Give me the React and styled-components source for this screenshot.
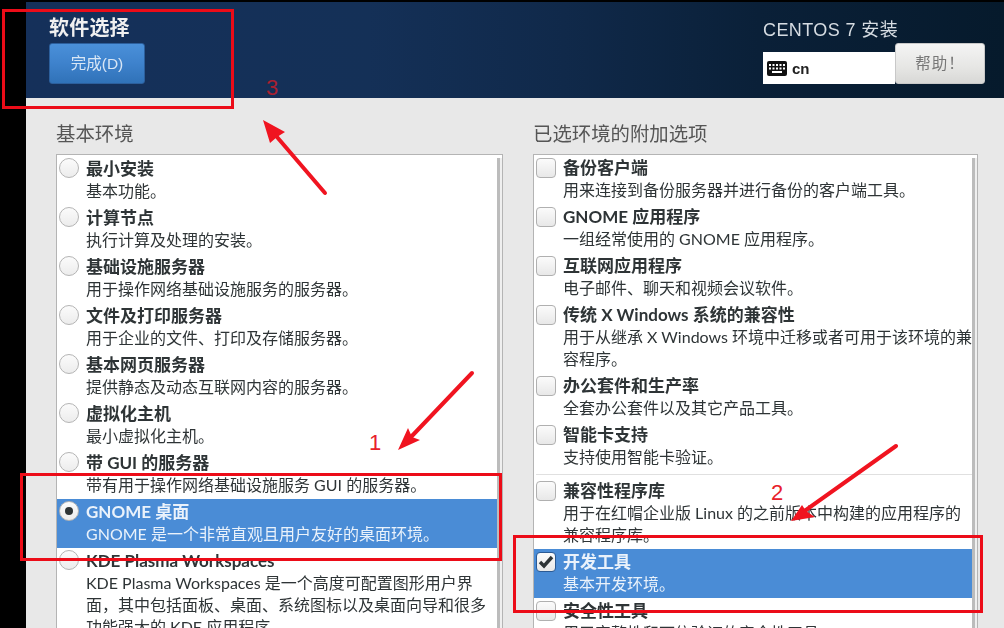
import styled, { createGlobalStyle } from "styled-components";

const GlobalStyle = createGlobalStyle`
    html, body {
        margin: 0;
        padding: 0;
        background: #000;
    }
    body {
        font-family: "Liberation Sans", "Noto Sans CJK SC", sans-serif;
    }
`;

const Screen = styled.div`
    position: relative;
    width: 1004px;
    height: 628px;
    overflow: hidden;
    padding-left: 26px;
    padding-top: 2px;
    box-sizing: border-box;
    background: #000;
`;
const Window = styled.div`
    height: 626px;
    display: flex;
    flex-direction: column;
    background: #e8e8e8;
    filter: blur(0.35px);
`;
const Header = styled.header`
    height: 96px;
    flex-shrink: 0;
    box-sizing: border-box;
    padding: 14px 18px 0 23px;
    display: flex;
    justify-content: space-between;
    color: #fff;
    background: linear-gradient(90deg, #15305a 0%, #143057 35%, #10294a 55%, #0a2038 75%, #061a2c 100%);
`;
const HeaderLeft = styled.div`
    display: flex;
    flex-direction: column;
    gap: 3px;
`;
const Spoke = styled.h1`
    margin: 0;
    font-size: 20px;
    line-height: 24px;
    font-weight: bold;
    letter-spacing: 0.2px;
    color: #f0f0f0;
`;
const DoneButton = styled.button`
    width: 96px;
    height: 41px;
    padding: 0 0 3px;
    border: 1px solid #2c5f9c;
    border-radius: 3px;
    font: inherit;
    font-size: 15.5px;
    color: #d8e6f5;
    background: linear-gradient(180deg, #4a90d9 0%, #3e82cc 50%, #3072b8 100%);
`;
const HeaderRight = styled.div`
    width: 223px;
    padding-top: 2px;
`;
const Product = styled.div`
    font-size: 18px;
    line-height: 24px;
    letter-spacing: 0.4px;
    color: #d6dce2;
    padding-bottom: 5px;
`;
const LangRow = styled.div`
    display: flex;
    align-items: flex-end;
    margin-top: -4px;
`;
const LangField = styled.div`
    width: 132px;
    height: 32px;
    box-sizing: border-box;
    padding-left: 4px;
    display: flex;
    align-items: center;
    gap: 5px;
    background: #fff;
    color: #222;
    font-size: 15px;
    font-weight: bold;
`;
const HelpButton = styled.button`
    width: 90px;
    height: 41px;
    padding: 0 0 3px;
    border: 1px solid #c8c8c8;
    border-radius: 3px;
    font: inherit;
    font-size: 15.5px;
    letter-spacing: 1px;
    color: #777;
    background: linear-gradient(180deg, #f4f4f4 0%, #e6e6e4 60%, #d8d8d6 100%);
`;
const Columns = styled.main`
    flex: 1;
    min-height: 0;
    display: grid;
    grid-template-columns: 447px 445px;
    column-gap: 30px;
    padding: 23px 0 0 30px;
`;
const Column = styled.section`
    display: flex;
    flex-direction: column;
    min-height: 0;
`;
const ColumnTitle = styled.h2`
    margin: 1px 0 8px;
    font-size: 19.4px;
    line-height: 24px;
    font-weight: normal;
    color: #555;
`;
const ListBox = styled.div`
    flex: 1;
    position: relative;
    box-sizing: border-box;
    padding-top: ${props => props.$offset || 0}px;
    border: 1px solid #b4b4b4;
    border-bottom: 0;
    background: #fff;
    overflow: hidden;
`;
const ScrollBar = styled.div`
    position: absolute;
    top: 3px;
    right: 0;
    bottom: 0;
    width: 3px;
    border-right: 2px solid #efefef;
    background: #bcbcbc;
`;
const Row = styled.div`
    height: ${props => props.$lines === 3 ? 71 : 49}px;
    box-sizing: border-box;
    padding: 1px 3px 0 29px;
    position: relative;
    font-family: Lato, "Noto Sans CJK SC", sans-serif;
    background: ${props => props.$selected ? "#4a8cd6" : "transparent"};
    color: ${props => props.$selected ? "#eaf2fb" : "#2e3436"};
`;
const RowTitle = styled.div`
    font-size: 17px;
    line-height: 23px;
    font-weight: bold;
    white-space: nowrap;
`;
const RowText = styled.div`
    font-size: 16px;
    line-height: 22px;
`;
const Radio = styled.span`
    position: absolute;
    left: 2px;
    top: 2px;
    width: 20px;
    height: 20px;
    box-sizing: border-box;
    border-radius: 50%;
    border: 1px solid #b4b4b4;
    display: flex;
    align-items: center;
    justify-content: center;
    background: linear-gradient(180deg, #fbfbfb 0%, #ececec 100%);
    &::after {
        content: "";
        display: ${props => props.$checked ? "block" : "none"};
        width: 8px;
        height: 8px;
        border-radius: 50%;
        background: #2e3436;
    }
`;
const CheckBox = styled.span`
    position: absolute;
    left: 2px;
    top: 3px;
    width: 20px;
    height: 20px;
    box-sizing: border-box;
    border-radius: 4px;
    border: 1px solid ${props => props.$checked ? "#2b5a94" : "#b0b0b0"};
    display: flex;
    align-items: center;
    justify-content: center;
    background: linear-gradient(180deg, #fbfbfb 0%, #e8e8e8 100%);
`;
const Separator = styled.div`
    height: 4px;
    margin: 0 2px 3px;
    border-bottom: 1px solid #e0e0e0;
    box-sizing: border-box;
`;
const RedBox = styled.div`
    position: absolute;
    left: ${props => props.$x}px;
    top: ${props => props.$y}px;
    width: ${props => props.$w}px;
    height: ${props => props.$h}px;
    box-sizing: border-box;
    border: 3px solid #ec0c18;
`;
const Number = styled.span`
    position: absolute;
    left: ${props => props.$x}px;
    top: ${props => props.$y}px;
    font-size: 22px;
    line-height: 24px;
    color: ${props => props.$dark ? "#a82030" : "#e8202a"};
`;
const ArrowLayer = styled.svg`
    position: absolute;
    left: 0;
    top: 0;
    pointer-events: none;
`;

const baseEnvs = [
    { title: "最小安装", text: "基本功能。" },
    { title: "计算节点", text: "执行计算及处理的安装。" },
    { title: "基础设施服务器", text: "用于操作网络基础设施服务的服务器。" },
    { title: "文件及打印服务器", text: "用于企业的文件、打印及存储服务器。" },
    { title: "基本网页服务器", text: "提供静态及动态互联网内容的服务器。" },
    { title: "虚拟化主机", text: "最小虚拟化主机。" },
    { title: "带 GUI 的服务器", text: "带有用于操作网络基础设施服务 GUI 的服务器。" },
    { title: "GNOME 桌面", text: "GNOME 是一个非常直观且用户友好的桌面环境。", selected: true },
    { title: "KDE Plasma Workspaces", text: "KDE Plasma Workspaces 是一个高度可配置图形用户界面，其中包括面板、桌面、系统图标以及桌面向导和很多功能强大的 KDE 应用程序。" },
];

const addons = [
    { title: "备份客户端", text: "用来连接到备份服务器并进行备份的客户端工具。" },
    { title: "GNOME 应用程序", text: "一组经常使用的 GNOME 应用程序。" },
    { title: "互联网应用程序", text: "电子邮件、聊天和视频会议软件。" },
    { title: "传统 X Windows 系统的兼容性", text: "用于从继承 X Windows 环境中迁移或者可用于该环境的兼容程序。", lines: 3 },
    { title: "办公套件和生产率", text: "全套办公套件以及其它产品工具。" },
    { title: "智能卡支持", text: "支持使用智能卡验证。" },
    { separator: true },
    { title: "兼容性程序库", text: "用于在红帽企业版 Linux 的之前版本中构建的应用程序的兼容程序库。", lines: 3 },
    { title: "开发工具", text: "基本开发环境。", selected: true },
    { title: "安全性工具", text: "用于完整性和可信验证的安全性工具。" },
];

function KeyboardIcon() {
    return (
        <svg width="20" height="15" viewBox="0 0 20 15">
            <rect x="0" y="0" width="20" height="15" rx="2" fill="#111" />
            <g fill="#fff">
                <rect x="2" y="3" width="2" height="2" />
                <rect x="5.5" y="3" width="2" height="2" />
                <rect x="9" y="3" width="2" height="2" />
                <rect x="12.5" y="3" width="2" height="2" />
                <rect x="16" y="3" width="2" height="2" />
                <rect x="2" y="6.5" width="2" height="2" />
                <rect x="5.5" y="6.5" width="2" height="2" />
                <rect x="9" y="6.5" width="2" height="2" />
                <rect x="12.5" y="6.5" width="2" height="2" />
                <rect x="16" y="6.5" width="2" height="2" />
                <rect x="5" y="10" width="10" height="2" />
            </g>
        </svg>
    );
}

function CheckMark() {
    return (
        <svg width="16" height="14" viewBox="0 0 16 14">
            <path d="M2 7 L6 11 L14 2" fill="none" stroke="#2e3436" strokeWidth="3.4" />
        </svg>
    );
}

function App() {
    return (
        <Screen>
            <GlobalStyle />
            <Window>
                <Header>
                    <HeaderLeft>
                        <Spoke>软件选择</Spoke>
                        <DoneButton>完成(D)</DoneButton>
                    </HeaderLeft>
                    <HeaderRight>
                        <Product>CENTOS 7 安装</Product>
                        <LangRow>
                            <LangField><KeyboardIcon />cn</LangField>
                            <HelpButton>帮助！</HelpButton>
                        </LangRow>
                    </HeaderRight>
                </Header>
                <Columns>
                    <Column>
                        <ColumnTitle>基本环境</ColumnTitle>
                        <ListBox $offset={1}>
                            {baseEnvs.map(env =>
                                <Row key={env.title} $selected={env.selected}>
                                    <Radio $checked={env.selected} />
                                    <RowTitle>{env.title}</RowTitle>
                                    <RowText>{env.text}</RowText>
                                </Row>
                            )}
                            <ScrollBar />
                        </ListBox>
                    </Column>
                    <Column>
                        <ColumnTitle>已选环境的附加选项</ColumnTitle>
                        <ListBox>
                            {addons.map((addon, i) => addon.separator ?
                                <Separator key={i} /> :
                                <Row key={addon.title} $selected={addon.selected} $lines={addon.lines}>
                                    <CheckBox $checked={addon.selected}>
                                        {addon.selected && <CheckMark />}
                                    </CheckBox>
                                    <RowTitle>{addon.title}</RowTitle>
                                    <RowText>{addon.text}</RowText>
                                </Row>
                            )}
                            <ScrollBar />
                        </ListBox>
                    </Column>
                </Columns>
            </Window>

            <RedBox $x={2} $y={9} $w={232} $h={100} />
            <RedBox $x={20} $y={473} $w={482} $h={88} />
            <RedBox $x={513} $y={535} $w={470} $h={78} />
            <Number $x={266} $y={76} $dark>3</Number>
            <Number $x={369} $y={431}>1</Number>
            <Number $x={771} $y={481}>2</Number>
            <ArrowLayer width="1004" height="628" viewBox="0 0 1004 628">
                <g stroke="#f01420" strokeWidth="4" strokeLinecap="round">
                    <line x1="325" y1="193" x2="277" y2="137" />
                    <line x1="472" y1="373" x2="411" y2="437" />
                    <line x1="896" y1="446" x2="806" y2="510" />
                </g>
                <g fill="#f01420">
                    <polygon points="263,120 285,132 277,137 270,143" />
                    <polygon points="398,450 408,428 412,437 420,440" />
                    <polygon points="791,521 802,505 806,511 815,517" />
                </g>
            </ArrowLayer>
        </Screen>
    );
}

export default App;
